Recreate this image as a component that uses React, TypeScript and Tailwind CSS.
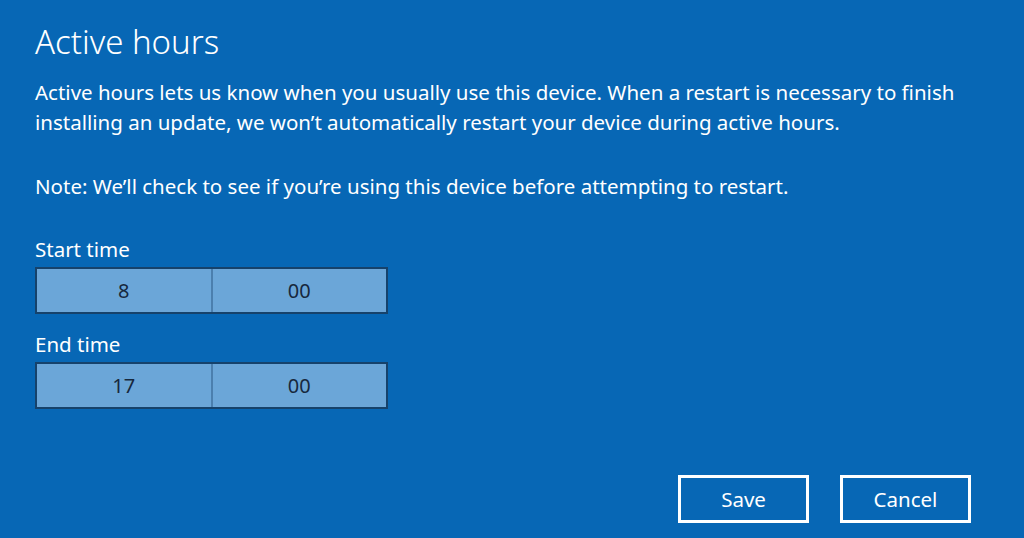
import React from 'react';

interface TimeFieldProps {
    label: string;
    hour: string;
    minute: string;
}

const TimeField: React.FC<TimeFieldProps> = ({ label, hour, minute }) => (
    <div className="flex flex-col">
        <div className="text-[20.5px] leading-[26px] text-white">{label}</div>
        <div className="mt-[5px] flex h-[47px] w-[353px] border-2 border-[#16426b] bg-[#6ba6d8] text-[20px] text-[#17283d]">
            <div className="flex flex-1 items-center justify-center border-r-2 border-[#4b7fae]">{hour}</div>
            <div className="flex flex-1 items-center justify-center">{minute}</div>
        </div>
    </div>
);

const App: React.FC = () => {
    return (
        <div
            className="flex h-[538px] w-[1024px] flex-col bg-[#0767b5] px-[35px] pt-[21px]"
            style={{ fontFamily: '"Noto Sans", "Open Sans", sans-serif' }}
        >
            <h1 className="text-[33px] font-light leading-[42px] text-white">Active hours</h1>
            <p className="mt-[14px] text-[20.5px] leading-[30px] text-white">
                Active hours lets us know when you usually use this device. When a restart is necessary to finish
                <br />
                installing an update, we won’t automatically restart your device during active hours.
            </p>
            <p className="mt-[34px] text-[20.5px] leading-[30px] text-white">
                Note: We’ll check to see if you’re using this device before attempting to restart.
            </p>
            <div className="mt-[35px] flex flex-col gap-[17px]">
                <TimeField label="Start time" hour="8" minute="00" />
                <TimeField label="End time" hour="17" minute="00" />
            </div>
            <div className="mt-auto mb-[15px] flex justify-end gap-[31px] pr-[18px]">
                <button className="h-[48px] w-[131px] border-[3px] border-white text-[20.5px] text-white">Save</button>
                <button className="h-[48px] w-[131px] border-[3px] border-white text-[20.5px] text-white">Cancel</button>
            </div>
        </div>
    );
};

export default App;
